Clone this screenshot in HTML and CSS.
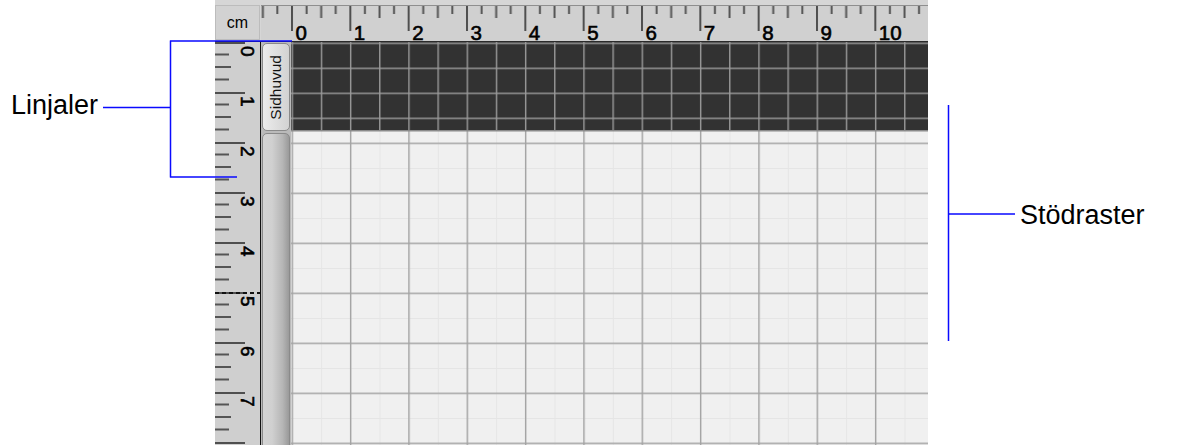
FILE: index.html
```html
<!DOCTYPE html>
<html lang="sv">
<head>
    <meta charset="UTF-8">
    <title>Linjaler och stödraster</title>
    <link rel="stylesheet" href="styles.css">
</head>
<body>

<div class="stage">
    <div class="note-col"></div>

    <div class="app">
        <!-- hörnet med enheten -->
        <div class="corner"><div class="corner-box">cm</div></div>

        <!-- vågrät linjal -->
        <div class="hruler">
            <svg width="667" height="35" class="ruler-svg">
                <defs>
                    <pattern id="hticks" x="30" y="0" width="58.333" height="35" patternUnits="userSpaceOnUse">
                        <rect x="0" y="0" width="2" height="25" fill="#4f4f4f"/>
                        <rect x="14.6" y="0" width="2" height="8" fill="#555"/>
                        <rect x="29.2" y="0" width="2" height="12" fill="#555"/>
                        <rect x="43.7" y="0" width="2" height="8" fill="#555"/>
                    </pattern>
                </defs>
                <rect width="667" height="35" fill="url(#hticks)"/>
                <g class="ruler-num">
                    <text x="34.5" y="33.5">0</text>
                    <text x="92.8" y="33.5">1</text>
                    <text x="151.2" y="33.5">2</text>
                    <text x="209.5" y="33.5">3</text>
                    <text x="267.8" y="33.5">4</text>
                    <text x="326.2" y="33.5">5</text>
                    <text x="384.5" y="33.5">6</text>
                    <text x="442.8" y="33.5">7</text>
                    <text x="501.2" y="33.5">8</text>
                    <text x="559.5" y="33.5">9</text>
                    <text x="617.8" y="33.5">10</text>
                </g>
            </svg>
        </div>

        <!-- lodrät linjal -->
        <div class="vruler">
            <svg width="45" height="403" class="ruler-svg">
                <defs>
                    <pattern id="vticks" x="0" y="0" width="45" height="50" patternUnits="userSpaceOnUse">
                        <rect x="0" y="0" width="30" height="2" fill="#4f4f4f"/>
                        <rect x="0" y="11.5" width="14" height="2" fill="#555"/>
                        <rect x="0" y="24" width="16" height="2" fill="#555"/>
                        <rect x="0" y="36.5" width="14" height="2" fill="#555"/>
                    </pattern>
                </defs>
                <rect width="45" height="403" fill="url(#vticks)"/>
                <line x1="0" y1="251" x2="45" y2="251" stroke="#111" stroke-width="2" stroke-dasharray="4 3"/>
                <g class="ruler-num ruler-num-v">
                    <text transform="translate(26 4) rotate(90)">0</text>
                    <text transform="translate(26 54) rotate(90)">1</text>
                    <text transform="translate(26 104) rotate(90)">2</text>
                    <text transform="translate(26 154) rotate(90)">3</text>
                    <text transform="translate(26 204) rotate(90)">4</text>
                    <text transform="translate(26 254) rotate(90)">5</text>
                    <text transform="translate(26 304) rotate(90)">6</text>
                    <text transform="translate(26 354) rotate(90)">7</text>
                </g>
            </svg>
        </div>

        <!-- sektionsflikar -->
        <div class="tabs">
            <div class="tab tab-head"><span class="tab-label">Sidhuvud</span></div>
            <div class="tab tab-body"></div>
        </div>

        <!-- arbetsytan med stödraster -->
        <div class="canvas">
            <svg width="637" height="403">
                <defs>
                    <pattern id="minor" x="1" y="1" width="29.1667" height="25" patternUnits="userSpaceOnUse">
                        <rect x="0" y="0" width="1" height="25" fill="#e5e5e5"/>
                        <rect x="0" y="0" width="29.1667" height="1" fill="#e5e5e5"/>
                    </pattern>
                    <pattern id="major" x="0.6" y="0.6" width="58.333" height="50" patternUnits="userSpaceOnUse">
                        <rect x="0" y="0" width="1.4" height="50" fill="#a2a2a2"/>
                        <rect x="0" y="0" width="58.333" height="1.4" fill="#a2a2a2"/>
                    </pattern>
                    <pattern id="dark" x="0.6" y="0.6" width="29.1667" height="25" patternUnits="userSpaceOnUse">
                        <rect x="0" y="0" width="1.4" height="25" fill="#9a9a9a"/>
                        <rect x="0" y="0" width="29.1667" height="1.4" fill="#9a9a9a"/>
                    </pattern>
                </defs>
                <rect width="637" height="403" fill="#f0f0f0"/>
                <rect width="637" height="403" fill="url(#minor)"/>
                <rect width="637" height="403" fill="url(#major)"/>
                <rect width="637" height="89" fill="#323232"/>
                <rect width="637" height="89" fill="url(#dark)"/>
                <rect y="88" width="637" height="1.5" fill="#8a8a8a"/>
            </svg>
        </div>
    </div>
</div>

<!-- förklaringar -->
<svg class="callout-lines" width="1204" height="445">
    <path d="M103 107.5H170.5M170.5 40.5V177.5M170 41H292M170 177H237" />
    <path d="M948.5 105V341M948 214H1015" />
</svg>
<div class="callout-label label-rulers">Linjaler</div>
<div class="callout-label label-grid">Stödraster</div>

</body>
</html>
```

FILE: styles.css
```css
body {
    margin: 0;
    width: 1204px;
    height: 445px;
    overflow: hidden;
    position: relative;
    background: #fff;
    font-family: 'Liberation Sans', Arial, sans-serif;
    color: #000;
}

.stage {
    display: flex;
    height: 445px;
}

.note-col {
    width: 215px;
    flex: none;
}

.app {
    display: grid;
    grid-template-columns: 46px 30px 637px;
    grid-template-rows: 42px 403px;
    flex: none;
    background: #bdbdbd;
}

.corner {
    padding-top: 5px;
    background: #d6d6d6;
    border-bottom: 1px solid #2a2a2a;
    box-sizing: border-box;
}

.corner-box {
    width: 45px;
    height: 35px;
    box-sizing: border-box;
    border: 1px solid #bcbcbc;
    background: #d2d2d2;
    display: flex;
    align-items: center;
    justify-content: center;
    font-size: 16px;
    padding-top: 1px;
}

.hruler {
    grid-column: 2 / 4;
    padding-top: 5px;
    background: #d6d6d6;
}

.hruler .ruler-svg {
    display: block;
    border-top: 1px solid #8f8f8f;
    border-bottom: 1px solid #2a2a2a;
    background: #d0d0d0;
}

.vruler {
    border-right: 1px solid #111;
    background: #cfcfcf;
}

.ruler-svg {
    display: block;
}

.ruler-num {
    font-family: 'Liberation Sans', Arial, sans-serif;
    font-size: 20.5px;
    fill: #000;
    stroke: #000;
    stroke-width: 0.6px;
}

.ruler-num-v {
    font-size: 19px;
}

.tabs {
    display: flex;
    flex-direction: column;
    gap: 2px;
    padding: 1px 1px 0 1px;
    background: #bababa;
    overflow: hidden;
}

.tab {
    box-sizing: border-box;
    border: 1px solid #8a8a8a;
}

.tab-head {
    height: 88px;
    border-radius: 5px;
    background: linear-gradient(to right, #ececec, #d2d2d2);
    display: flex;
    align-items: center;
    justify-content: center;
}

.tab-label {
    writing-mode: vertical-rl;
    transform: rotate(180deg);
    font-size: 15.5px;
    color: #111;
}

.tab-body {
    flex: 1;
    margin-bottom: -6px;
    border-radius: 5px 5px 0 0;
    background: linear-gradient(to right, #d4d4d4 0%, #d0d0d0 35%, #b6b6b6 75%, #9a9a9a 100%);
}

.canvas svg {
    display: block;
}

.callout-lines {
    position: absolute;
    top: 0;
    left: 0;
    pointer-events: none;
}

.callout-lines path {
    fill: none;
    stroke: #0a0aff;
    stroke-width: 1.5;
}

.callout-label {
    position: absolute;
    font-size: 27px;
    line-height: 27px;
    color: #000;
}

.label-rulers {
    left: 11px;
    top: 92px;
}

.label-grid {
    left: 1020px;
    top: 202px;
}
```
